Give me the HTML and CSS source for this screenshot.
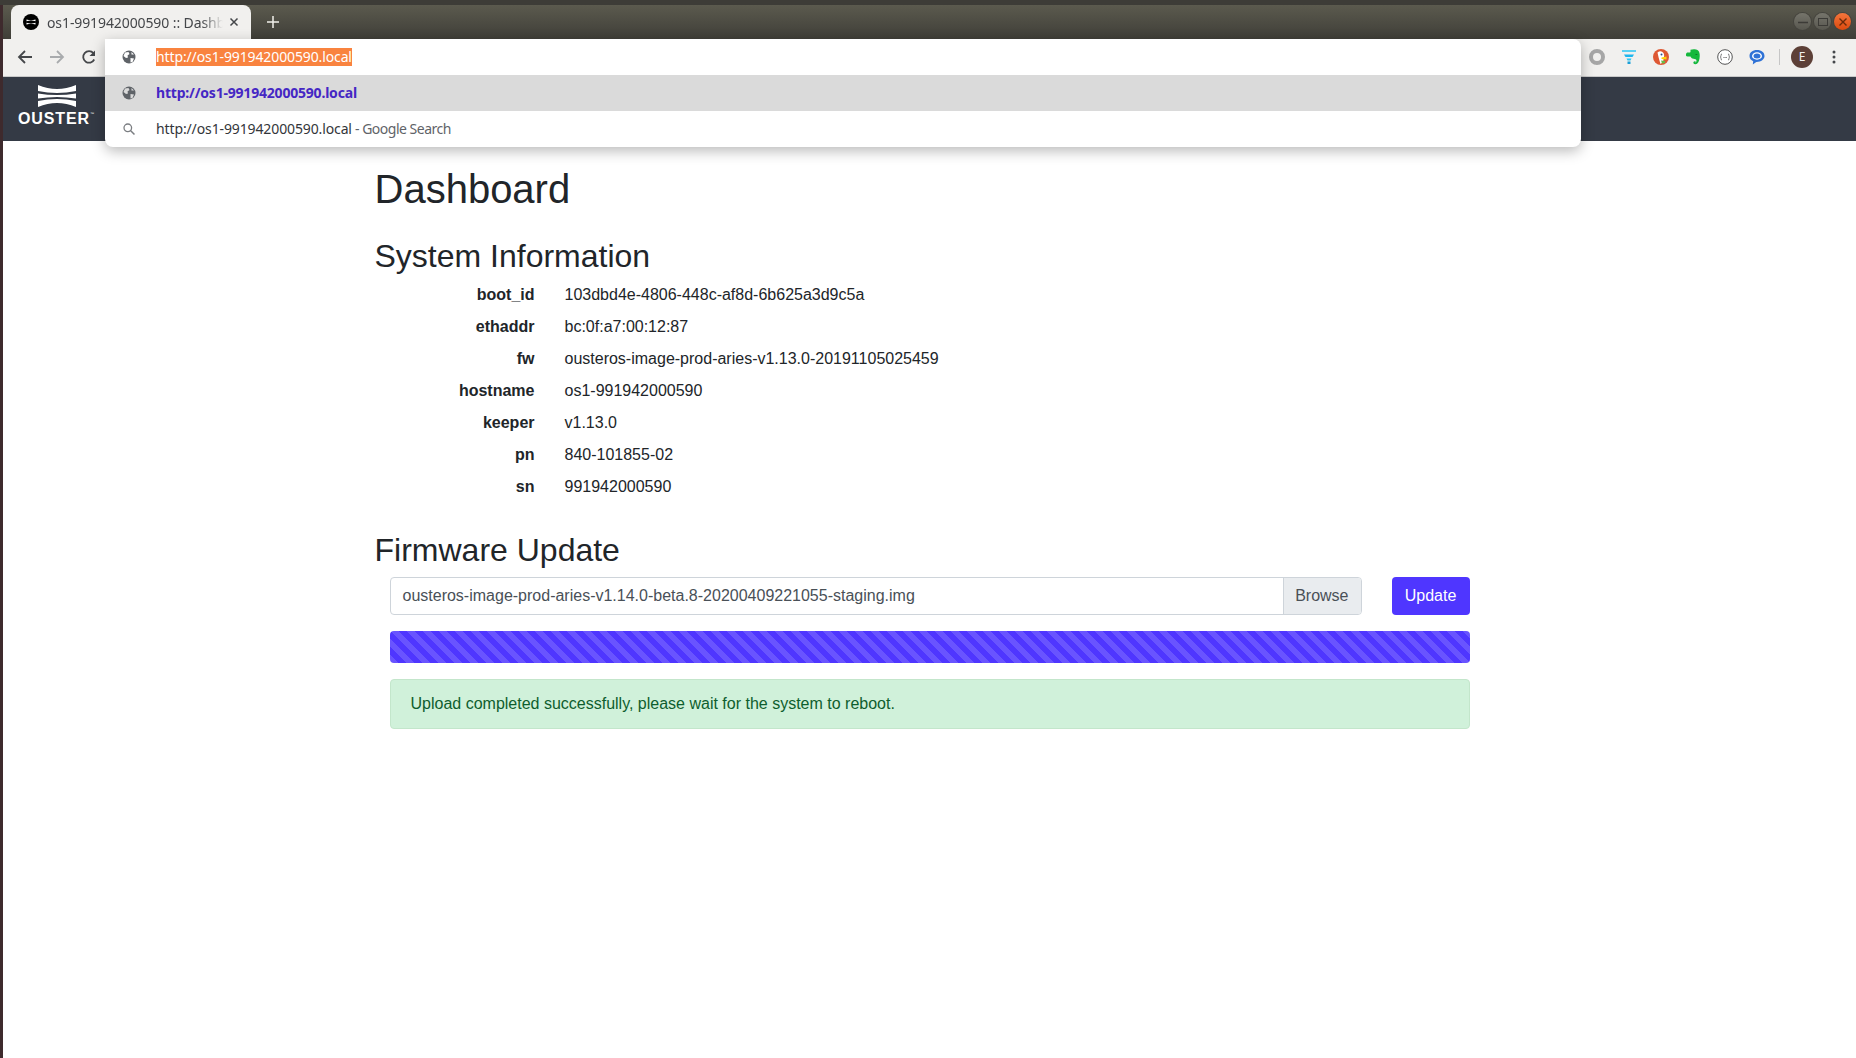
FILE: index.html
```html
<!DOCTYPE html>
<html lang="en">
<head>
  <meta charset="UTF-8" />
  <title>os1-991942000590 :: Dashboard</title>
  <link rel="stylesheet" href="styles.css">
</head>

<body>
  <div class="desktop-edge"></div>
  <div class="window">
    <div class="top-panel"></div>

    <div class="tab-strip">
      <div class="tab">
        <svg class="favicon" width="16" height="16" viewBox="0 0 16 16">
          <circle cx="8" cy="8" r="8" fill="#000"/>
          <path d="M3.5 5.5Q8 7 12.500 5.500V7.200Q8 6 3.500 7.200ZM3.500 8.800Q8 10 12.500 8.800V10.500Q8 9 3.500 10.500Z" fill="#fff"/>
        </svg>
        <span class="tab-title">os1-991942000590 :: Dashboard</span>
        <svg class="tab-close" width="10" height="10" viewBox="0 0 10 10">
          <path d="M1.500 1.500L8.500 8.500M8.500 1.500L1.500 8.500" stroke="#45474a" stroke-width="1.500"/>
        </svg>
      </div>
      <svg class="new-tab" width="12" height="12" viewBox="0 0 12 12">
        <path d="M6 0V12M0 6H12" stroke="#f1f0ea" stroke-width="1.500"/>
      </svg>
      <div class="window-buttons">
        <div class="win-btn"><svg width="10" height="10" viewBox="0 0 10 10"><path d="M0 5.500H10" stroke="#3c3b37" stroke-width="1.500"/></svg></div>
        <div class="win-btn"><svg width="10" height="10" viewBox="0 0 10 10"><rect x="0.500" y="1.500" width="9" height="7" fill="none" stroke="#3c3b37"/></svg></div>
        <div class="win-btn win-close"><svg width="10" height="10" viewBox="0 0 10 10"><path d="M1.500 1.500L8.500 8.500M8.500 1.500L1.500 8.500" stroke="#6b2a0a" stroke-width="1.400"/></svg></div>
      </div>
    </div>

    <div class="toolbar">
      <svg class="nav-icon" width="16" height="16" viewBox="0 0 16 16"><path d="M15 8H2M8 2L2 8L8 14" fill="none" stroke="#45474a" stroke-width="1.800"/></svg>
      <svg class="nav-icon" width="16" height="16" viewBox="0 0 16 16"><path d="M1 8H14M8 2L14 8L8 14" fill="none" stroke="#a9abad" stroke-width="1.800"/></svg>
      <svg class="nav-icon" width="16" height="16" viewBox="0 0 16 16"><path d="M13.200 10.500A5.800 5.800 0 1 1 12.400 4.100" fill="none" stroke="#45474a" stroke-width="1.800"/><path d="M14 1.500V7H8.500Z" fill="#45474a"/></svg>
      <div class="ext-icons">
        <svg width="16" height="16" viewBox="0 0 16 16"><circle cx="8" cy="8" r="6" fill="none" stroke="#a6a6a6" stroke-width="4"/></svg>
        <svg width="16" height="16" viewBox="0 0 16 16"><path d="M1 2H15" stroke="#27c6f3" stroke-width="1.500"/><path d="M3 5.500H13L11.500 8H4.500Z" fill="#1fb6ee"/><path d="M5.500 9.500H10.500L9.500 11.500H6.500Z" fill="#27c6f3"/><rect x="6.500" y="12.500" width="3" height="2.500" fill="#1b9fd8"/></svg>
        <svg width="16" height="16" viewBox="0 0 16 16"><circle cx="8" cy="8" r="8" fill="#de5833"/><path d="M4.500 3.500Q8 1 10.500 4Q11.500 6 11 8L10 13L7.500 15Q5.500 9 4.500 3.500Z" fill="#fff"/><path d="M8.500 8.500L13.500 7.500V10.500L8.500 10Z" fill="#fdd20a"/><path d="M8 11.500L12 12V14L9 14.500Z" fill="#65bc46"/><circle cx="8.500" cy="5.500" r="1" fill="#2d4f8e"/></svg>
        <svg width="16" height="16" viewBox="0 0 16 16"><path d="M5.500 0.800C7.500 0 11 0 12.800 1.200C15 2.800 15 7 14.500 9.500C14 12.500 12.800 15 10.500 15.200C8.800 15.300 8 14 8.500 13C9 12 10.500 12 11 13L10 13.500C10.800 13.800 11.500 12.800 11.500 11.500C11.500 10.200 10 10 8.500 9.800C6.800 9.500 6 8.500 5.500 7.500H2.500C1.300 7.500 0.800 6.500 1 5.200C1.200 4 1.800 3.500 2.800 3.500H4.800C5.200 3.500 5.500 3.200 5.500 2.800Z" fill="#14b83c"/><path d="M10.500 5.500H12.300" stroke="#0c7a28" stroke-width="1"/></svg>
        <svg width="16" height="16" viewBox="0 0 16 16"><circle cx="8" cy="8" r="7.300" fill="#fff" stroke="#555" stroke-width="1"/><path d="M5 5Q3.800 5 4 6.500Q4 8 3.300 8Q4 8 4 9.500Q3.800 11 5 11M11 5Q12.200 5 12 6.500Q12 8 12.700 8Q12 8 12 9.500Q12.200 11 11 11" fill="none" stroke="#555" stroke-width="0.800"/><path d="M6.500 8.500H7.300M7.700 8.500H8.500M8.900 8.500H9.700" stroke="#555"/></svg>
        <svg width="16" height="16" viewBox="0 0 16 16"><path d="M8 1C3.500 1 0.500 3.500 0.500 7C0.500 9.500 2 11.300 4.200 12.200L3.800 15.500L7.300 12.900C12 13 15.500 10.500 15.500 7C15.500 3.500 12.500 1 8 1Z" fill="#2f72d6"/><ellipse cx="8" cy="7" rx="5" ry="3.700" fill="#fff"/><ellipse cx="8" cy="7" rx="3.500" ry="2.500" fill="#2f72d6"/></svg>
      </div>
      <div class="toolbar-sep"></div>
      <div class="avatar">E</div>
      <svg class="menu-dots" width="4" height="14" viewBox="0 0 4 14"><circle cx="2" cy="2" r="1.500" fill="#45474a"/><circle cx="2" cy="7" r="1.500" fill="#45474a"/><circle cx="2" cy="12" r="1.500" fill="#45474a"/></svg>
    </div>

    <nav class="navbar">
      <div class="brand">
        <svg width="38" height="22" viewBox="0 0 38 22">
          <path d="M0 0Q19 8 38 0V6Q19 10 0 6Z" fill="#fff"/>
          <path d="M0 8.500Q19 11.500 38 8.500V13.500Q19 10.500 0 13.500Z" fill="#fff"/>
          <path d="M0 16Q19 12 38 16V22Q19 14 0 22Z" fill="#fff"/>
        </svg>
        <span class="brand-name">OUSTER<sup>™</sup></span>
      </div>
    </nav>

    <main class="container">
      <h1>Dashboard</h1>

      <h2>System Information</h2>
      <table class="info-table">
        <tr><th>boot_id</th><td>103dbd4e-4806-448c-af8d-6b625a3d9c5a</td></tr>
        <tr><th>ethaddr</th><td>bc:0f:a7:00:12:87</td></tr>
        <tr><th>fw</th><td>ousteros-image-prod-aries-v1.13.0-20191105025459</td></tr>
        <tr><th>hostname</th><td>os1-991942000590</td></tr>
        <tr><th>keeper</th><td>v1.13.0</td></tr>
        <tr><th>pn</th><td>840-101855-02</td></tr>
        <tr><th>sn</th><td>991942000590</td></tr>
      </table>

      <h2 class="update-title">Firmware Update</h2>
      <div class="update-form">
        <div class="upload-row">
          <div class="file-input">
            <span class="file-name">ousteros-image-prod-aries-v1.14.0-beta.8-20200409221055-staging.img</span>
            <span class="browse">Browse</span>
          </div>
          <button class="btn-update">Update</button>
        </div>
        <div class="progress"></div>
        <div class="alert">Upload completed successfully, please wait for the system to reboot.</div>
      </div>
    </main>

    <div class="omnibox">
      <div class="omni-row">
        <svg class="globe" width="14" height="14" viewBox="0 0 14 14"><circle cx="7" cy="7" r="6.500" fill="#5f6368"/><path d="M3 2.500L6.500 2L7.500 4L5.500 5.500L6 7.500L4 8L1.500 6ZM8.500 8L12 8.500L10.500 12L8.500 12.500ZM9.500 2L12 4.500L9.500 4.500Z" fill="#fff"/></svg>
        <span class="omni-selected">http://os1-991942000590.local</span>
      </div>
      <div class="omni-row omni-active">
        <svg class="globe" width="14" height="14" viewBox="0 0 14 14"><circle cx="7" cy="7" r="6.500" fill="#5f6368"/><path d="M3 2.500L6.500 2L7.500 4L5.500 5.500L6 7.500L4 8L1.500 6ZM8.500 8L12 8.500L10.500 12L8.500 12.500ZM9.500 2L12 4.500L9.500 4.500Z" fill="#dadada"/></svg>
        <span class="omni-text omni-link">http://os1-991942000590.local</span>
      </div>
      <div class="omni-row">
        <svg class="globe" width="14" height="14" viewBox="0 0 14 14"><circle cx="5.800" cy="5.800" r="3.800" fill="none" stroke="#7b7e82" stroke-width="1.300"/><path d="M8.700 8.700L12.500 12.500" stroke="#7b7e82" stroke-width="1.500"/></svg>
        <span class="omni-text">http://os1-991942000590.local<span class="omni-hint"> - Google Search</span></span>
      </div>
    </div>
  </div>
</body>
</html>
```

FILE: styles.css
```css
:root {
  --chrome-font: "Noto Sans", "Open Sans", sans-serif;
  --page-font: "Liberation Sans", Arial, sans-serif;
  --brand: #4f36ff;
  --text: #212529;
}
html, body {
  margin: 0;
  height: 100%;
  overflow: hidden;
}
body {
  display: flex;
  background-color: #fff;
  font-family: var(--page-font);
  color: var(--text);
}
.desktop-edge {
  width: 3px;
  flex-shrink: 0;
  background-color: #3e2a2d;
}
.window {
  flex-grow: 1;
  min-width: 0;
  position: relative;
}
.top-panel {
  height: 5px;
  background-color: #3d3c37;
  margin-left: -3px;
}

/* tab strip */
.tab-strip {
  height: 34px;
  display: flex;
  align-items: flex-end;
  background: linear-gradient(#5b5a4e, #3f3e38);
}
.tab {
  width: 240px;
  height: 34px;
  margin-left: 8px;
  padding: 0 12px;
  box-sizing: border-box;
  display: flex;
  align-items: center;
  background-color: #f1f0ee;
  border-radius: 8px 8px 0 0;
  font-family: var(--chrome-font);
  font-size: 14px;
  color: #45474a;
}
.favicon {
  flex-shrink: 0;
  margin-right: 8px;
}
.tab-title {
  flex-grow: 1;
  overflow: hidden;
  white-space: nowrap;
  letter-spacing: -0.1px;
  -webkit-mask-image: linear-gradient(to right, #000 88%, transparent);
  mask-image: linear-gradient(to right, #000 88%, transparent);
}
.tab-close {
  flex-shrink: 0;
  margin-left: 6px;
  margin-right: 0;
}
.new-tab {
  align-self: center;
  margin-left: 16px;
}
.window-buttons {
  margin-left: auto;
  align-self: center;
  display: flex;
  gap: 3px;
  padding-right: 5px;
  margin-top: -1px;
}
.win-btn {
  width: 17px;
  height: 17px;
  border-radius: 50%;
  display: flex;
  align-items: center;
  justify-content: center;
  background: linear-gradient(#75746b, #58574f);
  box-shadow: 0 0 0 1px #45443e;
}
.win-close {
  background: linear-gradient(#f4753c, #dc4a0e);
}

/* toolbar */
.toolbar {
  height: 36px;
  padding-bottom: 1px;
  display: flex;
  align-items: center;
  padding-left: 14px;
  background-color: #f1f0ee;
  border-bottom: 1px solid #c9c9c9;
}
.nav-icon {
  margin-right: 16px;
  flex-shrink: 0;
}
.nav-icon:nth-child(3) {
  margin-right: 0;
}
.ext-icons {
  margin-left: auto;
  display: flex;
  gap: 16px;
}
.toolbar-sep {
  width: 1px;
  height: 16px;
  margin: 0 11px 0 14px;
  background-color: #c6c6c6;
}
.avatar {
  width: 22px;
  height: 22px;
  border-radius: 50%;
  background-color: #5d4037;
  color: #f1f0ee;
  font-family: var(--chrome-font);
  font-size: 12px;
  line-height: 22px;
  text-align: center;
}
.menu-dots {
  margin: 0 20px 0 19px;
}

/* page */
.navbar {
  height: 64px;
  display: flex;
  align-items: center;
  background-color: #343a45;
}
.brand {
  width: 107px;
  padding-bottom: 6px;
  display: flex;
  flex-direction: column;
  align-items: center;
  color: #fff;
}
.brand-name {
  font-family: "Liberation Sans", sans-serif;
  font-weight: 700;
  font-size: 16px;
  line-height: 18px;
  margin-top: 3px;
  letter-spacing: 0.9px;
}
.brand-name sup {
  font-size: 4px;
  font-weight: 400;
  vertical-align: 9px;
  line-height: 0;
}
.container {
  width: 1110px;
  margin: 0 auto;
  padding-top: 24px;
}
h1, h2 {
  margin: 0;
  font-weight: 400;
}
h1 {
  font-size: 40px;
  line-height: 48px;
  margin-bottom: 24px;
}
h2 {
  font-size: 32px;
  line-height: 38px;
  margin-bottom: 4px;
}
.info-table {
  border-collapse: collapse;
  font-size: 16px;
  line-height: 24px;
}
.info-table th,
.info-table td {
  padding: 4px 0;
}
.info-table th {
  width: 160px;
  text-align: right;
  font-weight: 700;
}
.info-table td {
  padding-left: 30px;
}
.update-title {
  margin-top: 28px;
  margin-bottom: 8px;
}
.update-form {
  padding: 0 15px;
}
.upload-row {
  display: flex;
  gap: 30px;
  margin-bottom: 16px;
}
.file-input {
  flex-grow: 1;
  height: 38px;
  box-sizing: border-box;
  display: flex;
  align-items: center;
  justify-content: space-between;
  border: 1px solid #ced4da;
  border-radius: 4px;
  color: #495057;
  font-size: 16px;
}
.file-name {
  padding-left: 12px;
}
.browse {
  height: 100%;
  padding: 0 12px 0 11px;
  display: flex;
  align-items: center;
  background-color: #e9ecef;
  border-left: 1px solid #ced4da;
  border-radius: 0 3px 3px 0;
}
.btn-update {
  width: 78px;
  height: 38px;
  padding: 0;
  border: 0;
  border-radius: 4px;
  background-color: var(--brand);
  color: #fff;
  font-family: var(--page-font);
  font-size: 16px;
}
.progress {
  height: 32px;
  margin-bottom: 16px;
  border-radius: 4px;
  background-color: var(--brand);
  background-image: linear-gradient(45deg, rgba(255,255,255,.15) 25%, transparent 25%, transparent 50%, rgba(255,255,255,.15) 50%, rgba(255,255,255,.15) 75%, transparent 75%, transparent);
  background-size: 16px 16px;
}
.alert {
  height: 50px;
  box-sizing: border-box;
  padding: 12px 20px;
  border: 1px solid #c3e6cb;
  border-radius: 4px;
  background-color: #d0f1da;
  color: #0e5e2e;
  font-size: 16px;
  line-height: 24px;
}

/* omnibox dropdown lies over the page */
.omnibox {
  position: absolute;
  left: 102px;
  top: 39px;
  width: 1476px;
  background-color: #fff;
  border-radius: 0 8px 8px 8px;
  box-shadow: 0 4px 14px rgba(0,0,0,.28);
  font-family: var(--chrome-font);
  font-size: 14px;
  letter-spacing: -0.12px;
  color: #33363a;
  overflow: hidden;
}
.omni-row {
  height: 36px;
  display: flex;
  align-items: center;
  white-space: nowrap;
}
.globe {
  margin-left: 17px;
  margin-right: 20px;
  flex-shrink: 0;
}
.omni-active {
  background-color: #dadada;
}
.omni-selected {
  background-color: #f9833f;
  color: #fff;
  line-height: 18px;
}
.omni-text {
  padding-bottom: 2px;
}
.omni-link {
  color: #4527c4;
  font-weight: 700;
  letter-spacing: -0.2px;
}
.omni-hint {
  color: #5f6368;
  letter-spacing: -0.5px;
}
```
